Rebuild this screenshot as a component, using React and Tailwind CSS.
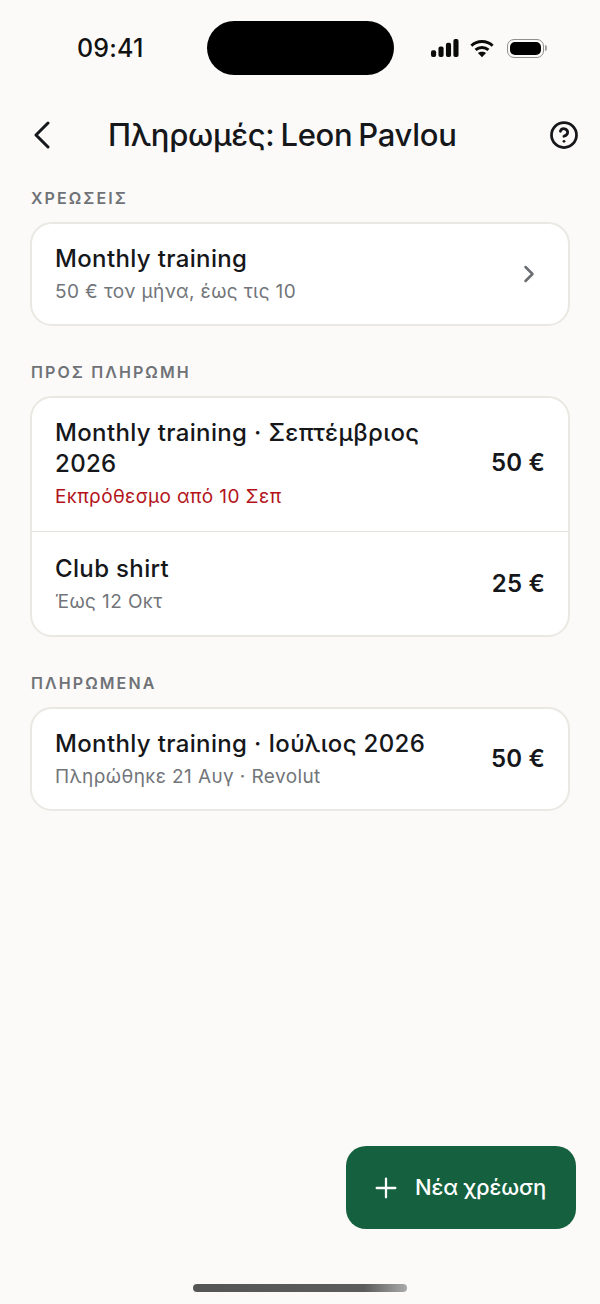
import { ChevronRight, CircleHelp, Plus } from 'lucide-react';

function StatusBar() {
  return (
    <div className="flex items-center h-[54px] mt-[21px] pl-[77px] pr-[53px]">
      <span className="text-[25px] font-medium tracking-[0.2px] leading-[56px] text-[#111] w-[130px]">09:41</span>
      <div className="w-[187px] h-[54px] rounded-[27px] bg-black" />
      <div className="flex items-center gap-[11px] ml-auto">
        <svg width="28" height="18" viewBox="0 0 30 19" preserveAspectRatio="none" fill="#0a0a0a">
          <rect x="0" y="12" width="5.5" height="7" rx="2" />
          <rect x="8" y="8" width="5.5" height="11" rx="2" />
          <rect x="16" y="4" width="5.5" height="15" rx="2" />
          <rect x="24" y="0" width="5.5" height="19" rx="2" />
        </svg>
        <svg width="24" height="19" viewBox="0 0 26 20" fill="none" stroke="#0a0a0a" strokeWidth="3.2">
          <path d="M1.5 7 C8 1 18 1 24.5 7" />
          <path d="M6 11.5 C10 8 16 8 20 11.5" />
          <path d="M13 19.5 L8.6 15 C11 13 15 13 17.4 15 Z" fill="#0a0a0a" stroke="none" />
        </svg>
        <div className="flex items-center ml-[2px]">
          <div className="w-[37px] h-[19px] rounded-[7px] border border-[#8f8f8f] p-[2px]">
            <div className="w-full h-full rounded-[5px] bg-black" />
          </div>
          <div className="w-[2px] h-[6px] ml-[1px] rounded-r-sm bg-[#a0a0a0]" />
        </div>
      </div>
    </div>
  );
}

function Row({ title, sub, subClass, amount, chevron, border, afterDivider }) {
  const padding = border ? 'pt-[19px] pb-[22px] border-b border-[#e4e3de]' : afterDivider ? 'pt-[21px] pb-[21px]' : 'pt-[19px] pb-[20px]';
  return (
    <div className={`flex items-center px-[23px] ${padding}`}>
      <div className="flex-1 min-w-0">
        <div className="text-[24px] leading-[31px] font-[550] tracking-[0.35px] text-[#15171a]">{title}</div>
        <div className={`text-[19px] leading-[24px] mt-[6px] tracking-[0.4px] ${subClass || 'text-[#72757a]'}`}>{sub}</div>
      </div>
      {amount && <div className="ml-[40px] text-[24px] font-semibold tracking-[0.2px] text-[#15171a] whitespace-nowrap">{amount}</div>}
      {chevron && <ChevronRight size={28} strokeWidth={2.2} className="mr-[2px] text-[#6b6e72]" />}
    </div>
  );
}

function Section({ label, children, className }) {
  return (
    <section className={className}>
      <h2 className="px-[31px] text-[16px] leading-[20px] font-semibold tracking-[2.1px] text-[#6f7276]">{label}</h2>
      <div className="mx-[30px] mt-[14px] bg-white rounded-[22px] border-2 border-[#e9e8e2] overflow-hidden">
        {children}
      </div>
    </section>
  );
}

export default function App() {
  return (
    <div className="relative h-[1304px] w-[600px] bg-[#fbfaf8] flex flex-col font-['Inter',sans-serif] overflow-hidden">
      <StatusBar />

      <header className="flex items-center h-[48px] mt-[36px] pl-[33px] pr-[21px]">
        <svg width="18" height="28" viewBox="0 0 18 28" fill="none" stroke="#15171a" strokeWidth="3" strokeLinecap="round" strokeLinejoin="round">
          <path d="M15 2 L3 14 L15 26" />
        </svg>
        <h1 className="ml-[57px] text-[31px] font-medium tracking-[-0.3px] [word-spacing:-2px] text-[#15171a]">Πληρωμές: Leon Pavlou</h1>
        <CircleHelp size={30} strokeWidth={2.2} className="ml-auto text-[#15171a]" />
      </header>

      <Section label="ΧΡΕΩΣΕΙΣ" className="mt-[29px]">
        <Row title="Monthly training" sub="50 € τον μήνα, έως τις 10" chevron />
      </Section>

      <Section label="ΠΡΟΣ ΠΛΗΡΩΜΗ" className="mt-[36px]">
        <Row
          title="Monthly training · Σεπτέμβριος 2026"
          sub="Εκπρόθεσμο από 10 Σεπ"
          subClass="text-[#b3141b]"
          amount="50 €"
          border
        />
        <Row title="Club shirt" sub="Έως 12 Οκτ" amount="25 €" afterDivider />
      </Section>

      <Section label="ΠΛΗΡΩΜΕΝΑ" className="mt-[36px]">
        <Row title="Monthly training · Ιούλιος 2026" sub="Πληρώθηκε 21 Αυγ · Revolut" amount="50 €" />
      </Section>

      <button className="absolute right-[24px] bottom-[75px] h-[83px] w-[230px] pl-[24px] rounded-[20px] bg-[#15613f] text-white flex items-center gap-[13px]">
        <Plus size={32} strokeWidth={1.7} />
        <span className="text-[22px] font-medium tracking-[-0.2px]">Νέα χρέωση</span>
      </button>

      <div className="absolute left-[193px] bottom-[12px] h-[8px] w-[214px] rounded-full bg-gradient-to-r from-[#555] via-[#5c5c5c] via-80% to-[#aaa]" />
    </div>
  );
}
